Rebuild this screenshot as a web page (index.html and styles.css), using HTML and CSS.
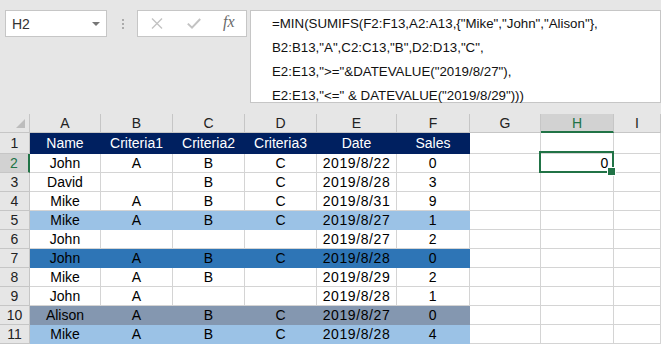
FILE: index.html
```html
<!DOCTYPE html>
<html lang="en">
<head>
    <meta charset="UTF-8">
    <meta name="viewport" content="width=device-width, initial-scale=1.0">
    <title>MIN SUMIFS</title>
    <link rel="stylesheet" href="styles.css">
</head>
<body>
    <div class="topbar">
        <div class="namebox">
            <span>H2</span>
            <span class="caret"></span>
        </div>
        <div class="grip"><i></i><i></i><i></i></div>
        <div class="fxbox">
            <svg class="ico" width="12" height="11" viewBox="0 0 12 11">
                <path d="M1 0.5 L11 10.5 M11 0.5 L1 10.5" stroke="#c3c3c3" stroke-width="1.4" fill="none"/>
            </svg>
            <svg class="ico" width="14" height="11" viewBox="0 0 14 11">
                <path d="M0.8 5.6 L5 9.6 L13.2 1" stroke="#c3c3c3" stroke-width="2" fill="none"/>
            </svg>
            <span class="fx">fx</span>
        </div>
        <div class="formula">
            <div>=MIN(SUMIFS(F2:F13,A2:A13,{"Mike","John","Alison"},</div>
            <div>B2:B13,"A",C2:C13,"B",D2:D13,"C",</div>
            <div>E2:E13,"&gt;="&amp;DATEVALUE("2019/8/27"),</div>
            <div>E2:E13,"&lt;=" &amp; DATEVALUE("2019/8/29")))</div>
        </div>
    </div>

    <div class="sheet">
        <div class="row">
            <div class="ch corner"></div>
            <div class="ch">A</div><div class="ch">B</div><div class="ch">C</div>
            <div class="ch">D</div><div class="ch">E</div><div class="ch">F</div>
            <div class="ch">G</div><div class="ch sel">H</div><div class="ch">I</div>
        </div>
        <div class="row navy tall">
            <div class="rh">1</div>
            <div class="d">Name</div><div class="d">Criteria1</div><div class="d">Criteria2</div>
            <div class="d">Criteria3</div><div class="d">Date</div><div class="d">Sales</div>
            <div class="e"></div><div class="e"></div><div class="e"></div>
        </div>
        <div class="row">
            <div class="rh sel">2</div>
            <div class="d">John</div><div class="d">A</div><div class="d">B</div>
            <div class="d">C</div><div class="d num">2019/8/22</div><div class="d num">0</div>
            <div class="e"></div><div class="e active num">0</div><div class="e"></div>
        </div>
        <div class="row">
            <div class="rh">3</div>
            <div class="d">David</div><div class="d"></div><div class="d">B</div>
            <div class="d">C</div><div class="d num">2019/8/28</div><div class="d num">3</div>
            <div class="e"></div><div class="e"></div><div class="e"></div>
        </div>
        <div class="row">
            <div class="rh">4</div>
            <div class="d">Mike</div><div class="d">A</div><div class="d">B</div>
            <div class="d">C</div><div class="d num">2019/8/31</div><div class="d num">9</div>
            <div class="e"></div><div class="e"></div><div class="e"></div>
        </div>
        <div class="row light">
            <div class="rh">5</div>
            <div class="d">Mike</div><div class="d">A</div><div class="d">B</div>
            <div class="d">C</div><div class="d num">2019/8/27</div><div class="d num">1</div>
            <div class="e"></div><div class="e"></div><div class="e"></div>
        </div>
        <div class="row">
            <div class="rh">6</div>
            <div class="d">John</div><div class="d"></div><div class="d"></div>
            <div class="d"></div><div class="d num">2019/8/27</div><div class="d num">2</div>
            <div class="e"></div><div class="e"></div><div class="e"></div>
        </div>
        <div class="row mid">
            <div class="rh">7</div>
            <div class="d">John</div><div class="d">A</div><div class="d">B</div>
            <div class="d">C</div><div class="d num">2019/8/28</div><div class="d num">0</div>
            <div class="e"></div><div class="e"></div><div class="e"></div>
        </div>
        <div class="row">
            <div class="rh">8</div>
            <div class="d">Mike</div><div class="d">A</div><div class="d">B</div>
            <div class="d"></div><div class="d num">2019/8/29</div><div class="d num">2</div>
            <div class="e"></div><div class="e"></div><div class="e"></div>
        </div>
        <div class="row">
            <div class="rh">9</div>
            <div class="d">John</div><div class="d">A</div><div class="d"></div>
            <div class="d"></div><div class="d num">2019/8/28</div><div class="d num">1</div>
            <div class="e"></div><div class="e"></div><div class="e"></div>
        </div>
        <div class="row slate">
            <div class="rh">10</div>
            <div class="d">Alison</div><div class="d">A</div><div class="d">B</div>
            <div class="d">C</div><div class="d num">2019/8/27</div><div class="d num">0</div>
            <div class="e"></div><div class="e"></div><div class="e"></div>
        </div>
        <div class="row light">
            <div class="rh">11</div>
            <div class="d">Mike</div><div class="d">A</div><div class="d">B</div>
            <div class="d">C</div><div class="d num">2019/8/28</div><div class="d num">4</div>
            <div class="e"></div><div class="e"></div><div class="e"></div>
        </div>
    </div>
</body>
</html>
```

FILE: styles.css
```css
* {
    box-sizing: border-box;
}
body {
    font-family: 'Liberation Sans', Arial, sans-serif;
    margin: 0;
    padding: 0;
    width: 661px;
    height: 344px;
    overflow: hidden;
    background: #e6e6e6;
    color: #000;
}
.topbar {
    display: flex;
    align-items: flex-start;
    height: 114px;
    padding: 10px 0 0 5px;
}
.namebox {
    width: 102px;
    height: 27px;
    background: #fff;
    border: 1px solid #c6c6c6;
    display: flex;
    align-items: center;
    justify-content: space-between;
    padding: 0 6px 0 6px;
    font-size: 14px;
    color: #333;
}
.caret {
    width: 0;
    height: 0;
    border-left: 4px solid transparent;
    border-right: 4px solid transparent;
    border-top: 4px solid #767676;
}
.grip {
    display: flex;
    flex-direction: column;
    gap: 2px;
    margin: 9px 13px 0 15px;
}
.grip i {
    display: block;
    width: 2px;
    height: 2px;
    background: #ababab;
}
.fxbox {
    width: 110px;
    height: 27px;
    background: #fff;
    border: 1px solid #c6c6c6;
    display: flex;
    align-items: center;
    padding: 0 0 0 13px;
}
.ico {
    margin-right: 24px;
}
.ico + .ico {
    margin-right: 22px;
}
.fx {
    font-family: 'Liberation Serif', 'Times New Roman', serif;
    font-style: italic;
    font-size: 16px;
    color: #6a6a6a;
    margin-top: -3px;
}
.formula {
    flex: 1;
    margin-left: 3px;
    height: 93px;
    background: #fff;
    border: 1px solid #c6c6c6;
    padding: 1px 0 0 21px;
    font-size: 13.3px;
    line-height: 24px;
    white-space: nowrap;
    color: #111;
}
.sheet {
    display: grid;
    grid-template-columns: 30px 71px 72px 72px 72px 80px 73px 71px 73px 1fr;
    grid-template-rows: 19px 21px repeat(10, 19px);
    font-size: 14px;
}
.row {
    display: contents;
}
.ch, .rh {
    background: #e6e6e6;
    border-right: 1px solid #c6c6c6;
    border-bottom: 1px solid #c6c6c6;
    text-align: center;
    line-height: 18px;
    color: #222;
}
.rh {
    line-height: 18px;
}
.tall .rh {
    line-height: 20px;
}
.corner {
    position: relative;
}
.corner::after {
    content: '';
    position: absolute;
    right: 4px;
    bottom: 4px;
    width: 0;
    height: 0;
    border-left: 9px solid transparent;
    border-bottom: 9px solid #bdbdbd;
}
.ch.sel {
    background: #d2d2d2;
    color: #217346;
    border-bottom: 2px solid #217346;
}
.rh.sel {
    background: #d2d2d2;
    color: #217346;
    border-right: 2px solid #217346;
}
.d, .e {
    background: #fff;
    border-right: 1px solid #d4d4d4;
    border-bottom: 1px solid #d4d4d4;
    text-align: center;
    line-height: 19px;
    white-space: nowrap;
    overflow: hidden;
}
.tall .d, .tall .e {
    line-height: 21px;
}
.num {
    letter-spacing: 0.6px;
}
.navy .d {
    background: #002060;
    border-color: #002060;
    color: #fff;
}
.light .d {
    background: #9bc2e6;
    border-color: #9bc2e6;
}
.mid .d {
    background: #2e75b6;
    border-color: #2e75b6;
}
.slate .d {
    background: #8497b0;
    border-color: #8497b0;
}
.active {
    position: relative;
    overflow: visible;
    z-index: 1;
    text-align: right;
    padding-right: 4px;
}
.active::after {
    content: '';
    position: absolute;
    top: -3px;
    left: -2px;
    right: -1px;
    bottom: -1px;
    border: 2px solid #217346;
}
.active::before {
    content: '';
    position: absolute;
    right: -3px;
    bottom: -4px;
    width: 7px;
    height: 7px;
    background: #217346;
    border: 1px solid #fff;
    z-index: 2;
}
```
